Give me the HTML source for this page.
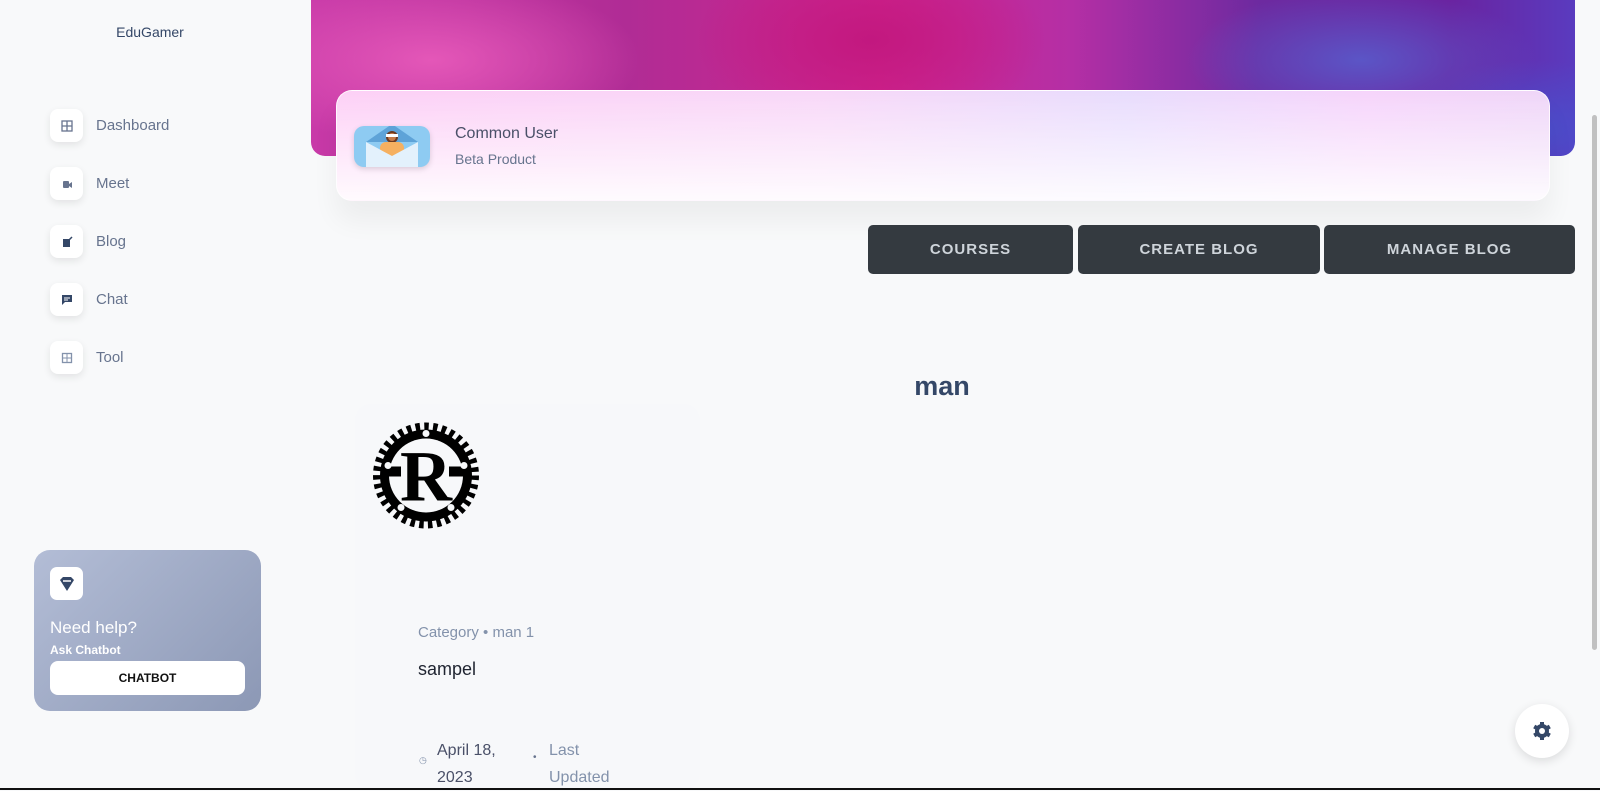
<!DOCTYPE html>
<html><head><meta charset="utf-8"><style>
*{box-sizing:border-box;margin:0;padding:0}
html,body{width:1600px;height:790px;overflow:hidden;background:#f8f9fa;font-family:"Liberation Sans",sans-serif;color:#344767}
.abs{position:absolute}
.brand{left:0;width:300px;top:24px;text-align:center;font-size:14px;color:#344767}
.nav{left:50px;display:flex;align-items:center}
.nav .ic{width:33px;height:33px;border-radius:8px;background:#fff;box-shadow:0 3px 8px rgba(0,0,0,.09);display:flex;align-items:center;justify-content:center}
.nav span{margin-left:13px;font-size:15px;color:#67748e}
.banner{left:311px;top:0;width:1264px;height:156px;border-radius:0 0 14px 14px;
background:
radial-gradient(ellipse 300px 120px at 120px 60px,#e457b8 0%,transparent 70%),
radial-gradient(ellipse 250px 130px at 560px 40px,#c2187f 0%,transparent 70%),
radial-gradient(ellipse 250px 100px at 1050px 60px,#5b55c6 0%,transparent 70%),
radial-gradient(ellipse 200px 100px at 1220px 130px,#4a4fcc 0%,transparent 70%),
linear-gradient(90deg,#c83aa8 0%,#b02c95 25%,#d0248e 45%,#b52fa5 60%,#6d2aa0 75%,#6a23a0 90%,#5a3bbf 100%)}
.card{left:336px;top:90px;width:1214px;height:111px;border-radius:16px;border:1px solid rgba(255,255,255,.8);
background:linear-gradient(180deg,rgba(255,255,255,0) 0%,rgba(255,255,255,.9) 100%),linear-gradient(90deg,#fdd0f6 0%,#f8d8f8 40%,#e8dcfd 65%,#f6d4fb 85%,#efd6f8 100%);
box-shadow:0 20px 27px rgba(0,0,0,.05)}
.btn{top:225px;height:49px;background:#343a40;color:#ced4da;border-radius:5px;font-size:15px;letter-spacing:1px;display:flex;align-items:center;justify-content:center;font-weight:bold}
.help{left:34px;top:550px;width:227px;height:161px;border-radius:16px;background:linear-gradient(135deg,#b3bdd6,#8c98b5)}
</style></head><body>
<div class="abs brand">EduGamer</div>

<div class="abs nav" style="top:109px"><div class="ic"><svg width="12" height="12" viewBox="0 0 12 12"><rect x="1" y="1" width="10" height="10" fill="none" stroke="#67748e" stroke-width="1.3"/><path d="M1 6H11M6 1V11" stroke="#67748e" stroke-width="1.3"/></svg></div><span>Dashboard</span></div>
<div class="abs nav" style="top:167px"><div class="ic"><svg width="12" height="12" viewBox="0 0 12 12"><rect x="2" y="3" width="6" height="7" rx="1" fill="#67748e"/><path d="M8 6L11 4V10L8 8Z" fill="#67748e"/></svg></div><span>Meet</span></div>
<div class="abs nav" style="top:225px"><div class="ic"><svg width="12" height="12" viewBox="0 0 12 12"><rect x="2" y="3" width="7" height="8" fill="#344767"/><path d="M8 4L11 1" stroke="#344767" stroke-width="1.5"/></svg></div><span>Blog</span></div>
<div class="abs nav" style="top:283px"><div class="ic"><svg width="12" height="12" viewBox="0 0 12 12"><path d="M1 1H11V8H4L1 11Z" fill="#344767"/><path d="M3 4H9M3 6H7" stroke="#fff" stroke-width="1"/></svg></div><span>Chat</span></div>
<div class="abs nav" style="top:341px"><div class="ic"><svg width="12" height="12" viewBox="0 0 12 12"><rect x="1.5" y="1.5" width="9" height="9" fill="none" stroke="#8392ab" stroke-width="1.3"/><path d="M6 2V10M2 6H10" stroke="#8392ab"/></svg></div><span>Tool</span></div>

<div class="abs help">
 <div class="abs" style="left:16px;top:17px;width:33px;height:33px;background:#fff;border-radius:7px;display:flex;align-items:center;justify-content:center"><svg width="18" height="18" viewBox="0 0 18 18"><path d="M2 5L5 2H13L16 5L9 16Z" fill="#344767"/><path d="M5 6H13" stroke="#fff" stroke-width="1.5"/></svg></div>
 <div class="abs" style="left:16px;top:68px;color:#fff;font-size:17px">Need help?</div>
 <div class="abs" style="left:16px;top:93px;color:#fff;font-size:12px;font-weight:bold">Ask Chatbot</div>
 <div class="abs" style="left:16px;top:111px;width:195px;height:34px;background:#fff;border-radius:8px;display:flex;align-items:center;justify-content:center;font-size:12px;font-weight:bold;color:#111">CHATBOT</div>
</div>

<div class="abs banner"></div>
<div class="abs card">
 <div class="abs" style="left:17px;top:35px;width:76px;height:41px;border-radius:10px;background:#8ecbf2;overflow:hidden;box-shadow:0 2px 6px rgba(0,0,0,.15)">
  <svg width="76" height="41" viewBox="0 0 76 41"><path d="M12 16L38 -2L64 16Z" fill="#5ea3d8"/><circle cx="38" cy="11" r="6" fill="#6b3a22"/><rect x="26" y="16" width="24" height="20" rx="6" fill="#f5b060"/><circle cx="38" cy="11" r="4" fill="#c57a48"/><rect x="32" y="8" width="12" height="3" fill="#fff"/><path d="M12 16L38 30L64 16V41H12Z" fill="#e3f1fc"/></svg>
 </div>
 <div class="abs" style="left:118px;top:34px;font-size:16px;color:#4a5068">Common User</div>
 <div class="abs" style="left:118px;top:60px;font-size:14px;color:#67748e">Beta Product</div>
</div>

<div class="abs btn" style="left:868px;width:205px">COURSES</div>
<div class="abs btn" style="left:1078px;width:242px">CREATE BLOG</div>
<div class="abs btn" style="left:1324px;width:251px">MANAGE BLOG</div>

<div class="abs" style="left:842px;width:200px;top:371px;text-align:center;font-size:27px;font-weight:bold;color:#344767">man</div>

<div class="abs" style="left:355px;top:404px;width:345px;height:386px;background:#f7f8fa;border-radius:16px"></div>
<svg class="abs" style="left:371px;top:420px" width="110" height="111" viewBox="0 0 110 110">
 <circle cx="55" cy="55" r="46" fill="#000"/>
 <g stroke="#000" stroke-width="8" stroke-dasharray="4.5 4.3" fill="none"><circle cx="55" cy="55" r="49"/></g>
 <circle cx="55" cy="55" r="37" fill="#f7f8fa"/>
 <text x="55" y="80" text-anchor="middle" font-family="Liberation Serif,serif" font-weight="bold" font-size="72" fill="#000">R</text>
 <rect x="16" y="46" width="14" height="10" fill="#000"/>
 <rect x="78" y="46" width="16" height="10" fill="#000"/>
 <circle cx="55" cy="13" r="3.5" fill="#f7f8fa"/><circle cx="17" cy="45" r="3.5" fill="#f7f8fa"/><circle cx="93" cy="45" r="3.5" fill="#f7f8fa"/><circle cx="30" cy="87" r="3.5" fill="#f7f8fa"/><circle cx="80" cy="87" r="3.5" fill="#f7f8fa"/>
</svg>

<div class="abs" style="left:418px;top:624px;font-size:15px;color:#8392ab">Category • man 1</div>
<div class="abs" style="left:418px;top:659px;font-size:18px;color:#1f2430">sampel</div>
<div class="abs" style="left:419px;top:755px;font-size:9px;color:#8392ab">◷</div>
<div class="abs" style="left:437px;top:737px;font-size:16px;line-height:27px;color:#4a5068">April 18,<br>2023</div>
<div class="abs" style="left:533px;top:752px;font-size:10px;color:#67748e">•</div>
<div class="abs" style="left:549px;top:737px;font-size:16px;line-height:27px;color:#8392ab">Last<br>Updated</div>

<div class="abs" style="left:1515px;top:704px;width:54px;height:54px;border-radius:50%;background:#fff;box-shadow:0 3px 10px rgba(0,0,0,.12);display:flex;align-items:center;justify-content:center">
 <svg width="20" height="20" viewBox="0 0 20 20"><g fill="#344767"><circle cx="10" cy="10" r="7"/><g stroke="#344767" stroke-width="4"><path d="M10 1V19M2.2 5.5L17.8 14.5M2.2 14.5L17.8 5.5"/></g></g><circle cx="10" cy="10" r="3" fill="#fff"/></svg>
</div>

<div class="abs" style="left:1592px;top:115px;width:5px;height:535px;background:#c1c1c1;border-radius:3px"></div>
<div class="abs" style="left:0;top:788px;width:1600px;height:2px;background:#111"></div>
</body></html>
